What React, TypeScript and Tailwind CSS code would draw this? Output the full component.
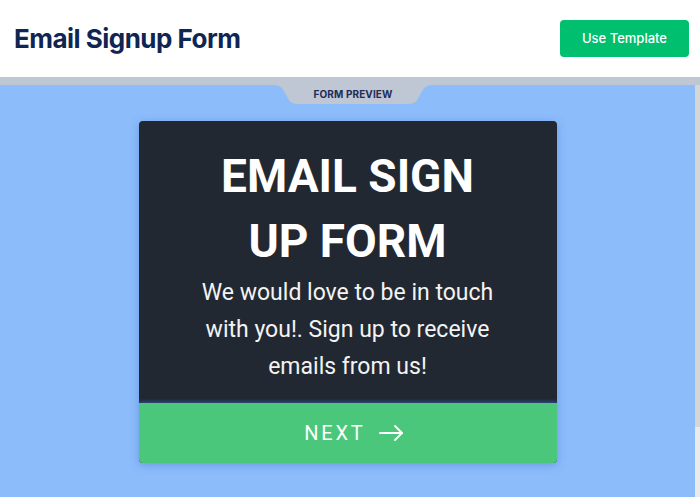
function PreviewTab() {
  return (
    <div className="absolute left-[273px] top-0 h-[19px] w-[160px]">
      <svg width="160" height="19" viewBox="0 0 160 19" className="absolute inset-0">
        <path
          d="M0 0 C8 0 10 4 13 10 C16 16 18 19 25 19 L135 19 C142 19 144 16 147 10 C150 4 152 0 160 0 Z"
          fill="#bfc6d4"
        />
      </svg>
      <div className="relative flex h-full items-center justify-center text-[10px] font-bold tracking-[0.01em] text-[#1d2e54]">
        FORM PREVIEW
      </div>
    </div>
  );
}

function LongArrow() {
  return (
    <svg width="24" height="16" viewBox="0 0 24 16" fill="none" stroke="currentColor" strokeWidth="1.8" strokeLinecap="round" strokeLinejoin="round">
      <path d="M1 8 H23" />
      <path d="M16 1 L23 8 L16 15" />
    </svg>
  );
}

export default function App() {
  return (
    <div className="flex h-[497px] w-full flex-col overflow-hidden bg-white font-['Inter',sans-serif]">
      {/* header */}
      <div className="flex h-[77px] shrink-0 items-center justify-between pl-[14px] pr-[11px]">
        <h1 className="text-[26px] font-bold tracking-[-0.02em] text-[#0f2552]">Email Signup Form</h1>
        <button className="h-[37px] w-[129px] rounded-[4px] bg-[#00bf6f] text-[13px] font-medium text-white">
          Use Template
        </button>
      </div>
      <div className="h-[8px] shrink-0 bg-[#bfc6d4]" />

      <div className="flex min-h-0 flex-1">
        {/* canvas */}
        <div className="relative flex flex-1 justify-center bg-[#8cbcfa] pt-[36px]">
          <PreviewTab />
          <div className="h-[342px] w-[418px] overflow-hidden rounded-[4px] bg-[#222832] font-['Roboto',sans-serif] text-white shadow-[0_2px_8px_rgba(60,110,200,0.45)]">
            <div className="flex h-[282px] flex-col items-center pt-[23px] text-center">
              <div className="text-[46px] font-bold leading-[65px]">
                EMAIL SIGN
                <br />
                UP FORM
              </div>
              <p className="text-[23px] leading-[37px] text-[#f3f3f3]">
                We would love to be in touch
                <br />
                with you!. Sign up to receive
                <br />
                emails from us!
              </p>
            </div>
            <div className="flex h-[60px] items-center justify-center gap-[16px] bg-[#4bc77c] pl-[12px] shadow-[0_-2px_3px_rgba(50,90,170,0.6)]">
              <span className="mr-[-0.14em] text-[20px] font-normal tracking-[0.14em]">NEXT</span>
              <LongArrow />
            </div>
          </div>
        </div>
        {/* scrollbar */}
        <div className="flex w-[5px] flex-col">
          <div className="h-[342px] bg-[#d6d6d6]" />
          <div className="flex-1 bg-[#ebebeb]" />
        </div>
      </div>
    </div>
  );
}
